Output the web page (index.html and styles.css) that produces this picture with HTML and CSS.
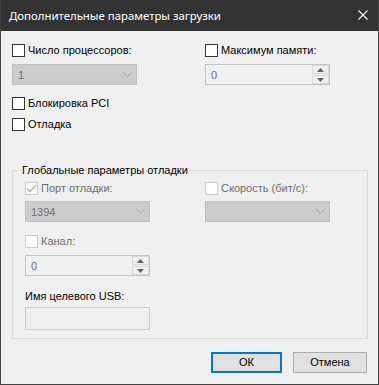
FILE: index.html
```html
<!DOCTYPE html>
<html lang="ru">
<head>
<meta charset="utf-8">
<title>Дополнительные параметры загрузки</title>
<link rel="stylesheet" href="styles.css">
</head>
<body>
<div class="window">
  <div class="titlebar">
    <span class="title">Дополнительные параметры загрузки</span>
    <svg class="close" width="10" height="10" viewBox="0 0 10 10"><path d="M0.5 0.5 L9.5 9.5 M9.5 0.5 L0.5 9.5" stroke="#ffffff" stroke-width="1.1" fill="none"/></svg>
  </div>
  <div class="content">
    <div class="top">
      <div class="col">
        <div class="check"><span class="box"></span><span>Число процессоров:</span></div>
        <div class="combo disabled gap-7"><span class="val">1</span><svg class="chev" width="9" height="5" viewBox="0 0 9 5"><path d="M0.5 0.5 L4.5 4.5 L8.5 0.5" stroke="#a6a6a6" fill="none"/></svg></div>
        <div class="check pci"><span class="box"></span><span>Блокировка PCI</span></div>
        <div class="check dbg"><span class="box"></span><span>Отладка</span></div>
      </div>
      <div class="col">
        <div class="check"><span class="box"></span><span>Максимум памяти:</span></div>
        <div class="spin gap-7">
          <span class="val">0</span>
          <div class="spinbtns">
            <span class="sbtn"><svg width="7" height="4" viewBox="0 0 7 4"><path d="M3.5 0 L7 4 L0 4 Z" fill="#606060"/></svg></span>
            <span class="sbtn"><svg width="7" height="4" viewBox="0 0 7 4"><path d="M0 0 L7 0 L3.5 4 Z" fill="#606060"/></svg></span>
          </div>
        </div>
      </div>
    </div>

    <div class="group">
      <div class="legend"><span>Глобальные параметры отладки</span></div>
      <div class="grid">
        <div class="col">
          <div class="check off"><span class="box checked"><svg width="11" height="9" viewBox="0 0 11 9"><path d="M1 4.5 L4 7.5 L10 1" stroke="#b3b3b3" stroke-width="1.3" fill="none"/></svg></span><span>Порт отладки:</span></div>
          <div class="combo disabled gap-6"><span class="val">1394</span><svg class="chev" width="9" height="5" viewBox="0 0 9 5"><path d="M0.5 0.5 L4.5 4.5 L8.5 0.5" stroke="#a6a6a6" fill="none"/></svg></div>
          <div class="check off kanal"><span class="box"></span><span>Канал:</span></div>
          <div class="spin gap-7">
            <span class="val">0</span>
            <div class="spinbtns">
              <span class="sbtn"><svg width="7" height="4" viewBox="0 0 7 4"><path d="M3.5 0 L7 4 L0 4 Z" fill="#606060"/></svg></span>
              <span class="sbtn"><svg width="7" height="4" viewBox="0 0 7 4"><path d="M0 0 L7 0 L3.5 4 Z" fill="#606060"/></svg></span>
            </div>
          </div>
          <div class="label usb">Имя целевого USB:</div>
          <div class="textbox"></div>
        </div>
        <div class="col">
          <div class="check off"><span class="box"></span><span>Скорость (бит/с):</span></div>
          <div class="combo disabled gap-6"><span class="val"></span><svg class="chev" width="9" height="5" viewBox="0 0 9 5"><path d="M0.5 0.5 L4.5 4.5 L8.5 0.5" stroke="#a6a6a6" fill="none"/></svg></div>
        </div>
      </div>
    </div>

    <div class="buttons">
      <button class="btn default">ОК</button>
      <button class="btn">Отмена</button>
    </div>
  </div>
</div>
</body>
</html>
```

FILE: styles.css
```css
* { box-sizing: border-box; }
html, body { margin: 0; padding: 0; background: #f0f0f0; }
body {
  font-family: "Liberation Sans", Arial, sans-serif;
  font-size: 11px;
  color: #000;
}
.window {
  width: 379px;
  height: 385px;
  border: 1px solid #444444;
  border-top: none;
  background: #f0f0f0;
  display: flex;
  flex-direction: column;
}
.titlebar {
  height: 31px;
  background: #333333;
  display: flex;
  align-items: center;
  justify-content: space-between;
  padding: 0 10px 0 8px;
  color: #ffffff;
}
.title { font-family: "Noto Sans", sans-serif; font-size: 11.4px; line-height: 16px; }
.close { display: block; margin-top: -1px; }

.content {
  flex: 1;
  padding: 13px 10px 0 11px;
  display: flex;
  flex-direction: column;
}
.top { display: flex; }
.top .col { display: flex; flex-direction: column; }
.top .col:first-child { width: 193px; }

.check {
  display: flex;
  align-items: center;
  gap: 3px;
  height: 13px;
  line-height: 15px;
  white-space: nowrap;
}
.box {
  width: 13px;
  height: 13px;
  border: 1px solid #333333;
  background: #ffffff;
  flex: none;
  display: flex;
  align-items: center;
  justify-content: center;
}
.check.off { color: #6d6d6d; }
.check.off .box { border-color: #cccccc; }
.pci { margin-top: 12px; }
.dbg { margin-top: 8px; }

.gap-7 { margin-top: 7px; }
.gap-6 { margin-top: 6px; }

.combo {
  width: 125px;
  height: 21px;
  border: 1px solid #bfbfbf;
  background: #cccccc;
  display: flex;
  align-items: center;
  justify-content: space-between;
  padding: 0 4px 0 5px;
  color: #6d6d6d;
}
.chev { display: block; margin-top: -1px; }

.spin {
  width: 125px;
  height: 21px;
  border: 1px solid #c4c4c4;
  background: #f0f0f0;
  display: flex;
  align-items: stretch;
  justify-content: space-between;
  padding: 0 0 0 5px;
  color: #6d6d6d;
}
.spin .val { align-self: center; }
.spinbtns {
  width: 17px;
  display: flex;
  flex-direction: column;
  gap: 1px;
  padding: 0;
}
.sbtn {
  flex: 1;
  background: #f0f0f0;
  border: 1px solid #dadada;
  display: flex;
  align-items: center;
  justify-content: center;
}
.sbtn svg { display: block; }

.group {
  margin-top: 39px;
  border: 1px solid #dcdcdc;
  height: 169px;
  padding: 0 0 0 12px;
}
.legend {
  margin: -8px 0 0 -4px;
  height: 15px;
  line-height: 15px;
}
.legend span { background: #f0f0f0; padding: 0 1px; }
.grid {
  display: grid;
  grid-template-columns: 180px 125px;
  margin-top: 4px;
}
.grid .col { display: flex; flex-direction: column; }
.kanal { margin-top: 13px; }
.label { height: 14px; line-height: 14px; white-space: nowrap; }
.usb { margin-top: 13px; }
.textbox {
  margin-top: 4px;
  width: 125px;
  height: 23px;
  border: 1px solid #cccccc;
  background: #f0f0f0;
}

.buttons {
  margin-top: 13px;
  display: flex;
  justify-content: flex-end;
  gap: 11px;
  padding-right: 1px;
}
.btn {
  font-family: inherit;
  font-size: 11px;
  color: #000;
  height: 21px;
  background: #e1e1e1;
  border: 1px solid #adadad;
  padding: 0;
  line-height: 17px;
}
.btn.default { width: 71px; border: 2px solid #0078d7; }
.btn:not(.default) { width: 74px; }
```
